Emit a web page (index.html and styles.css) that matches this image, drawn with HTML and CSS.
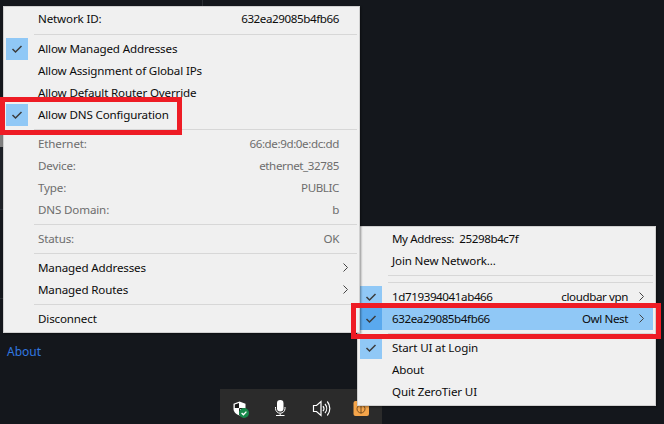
FILE: index.html
```html
<!DOCTYPE html>
<html lang="en">
<head>
<meta charset="utf-8">
<title>ZeroTier UI</title>
<link rel="stylesheet" href="styles.css">
</head>
<body>
<div class="desktop">
  <i class="bg-line bg-line-top"></i>
  <i class="bg-line bg-grey"></i>
  <i class="bg-line bg-strip"></i>
  <i class="bg-line bg-rule"></i>
  <a class="about-link">About</a>

  <div class="tray">
    <svg class="tray-icon" width="24" height="24" viewBox="0 0 24 24"><path d="M11.500 5.500l6 2.200v5c0 3.500-2.700 5.600-6 6.800-3.300-1.200-6-3.300-6-6.800v-5z" fill="#fff"/><path d="M11 7v5H6.800V8.500z" fill="#1a1a1a"/><path d="M11.500 12h6v1h-6zM11 12.500h1V19h-1z" fill="#1a1a1a"/><circle cx="16" cy="17" r="5" fill="#17894a"/><path d="M13.600 17l1.800 1.800 3-3.200" fill="none" stroke="#fff" stroke-width="1.300"/></svg>
    <svg class="tray-icon" width="24" height="24" viewBox="0 0 24 24"><rect x="9" y="4" width="6.500" height="11.500" rx="3.200" fill="#fff"/><path d="M7.500 11v1.500a4.700 4.700 0 0 0 9.500 0V11M12.200 17.500v2M8 19.500h8.500" fill="none" stroke="#fff" stroke-width="1"/></svg>
    <svg class="tray-icon" width="24" height="24" viewBox="0 0 24 24"><path d="M5.500 9.500h3l4.500-4v14l-4.500-4h-3z" fill="none" stroke="#fff" stroke-width="1.200"/><path d="M15 10a4 4 0 0 1 0 5M17 8a7 7 0 0 1 0 9M19.300 5.500a11 11 0 0 1 0 14" fill="none" stroke="#fff" stroke-width="1.200"/></svg>
    <svg class="tray-icon" width="24" height="24" viewBox="0 0 24 24"><rect x="5.500" y="5" width="15.500" height="15" rx="2" fill="#f5a54a"/><path d="M13 8v9.500M10.500 9.800a4 4 0 1 0 5 0" fill="none" stroke="#7a5020" stroke-width="1"/></svg>
  </div>

  <div class="menu menu-tray">
    <div class="row"><span class="check"></span><span class="label hex">My Address:&nbsp; 25298b4c7f</span></div>
    <div class="row"><span class="check"></span><span class="label">Join New Network...</span></div>
    <div class="sep"></div>
    <div class="sep"></div>
    <div class="row"><span class="check on"><svg width="12" height="10" viewBox="0 0 12 10"><path d="M1.500 5l3 3L10.500 2" fill="none" stroke="#3c3c3c" stroke-width="1.500"/></svg></span><span class="label hex">1d719394041ab466</span><span class="value">cloudbar vpn</span><svg class="arrow" width="5" height="9" viewBox="0 0 5 9"><path d="M.5.500l4 4-4 4" fill="none" stroke="#444"/></svg></div>
    <div class="row selected"><span class="check on"><svg width="12" height="10" viewBox="0 0 12 10"><path d="M1.500 5l3 3L10.500 2" fill="none" stroke="#3c3c3c" stroke-width="1.500"/></svg></span><span class="label hex">632ea29085b4fb66</span><span class="value">Owl Nest</span><svg class="arrow" width="5" height="9" viewBox="0 0 5 9"><path d="M.5.500l4 4-4 4" fill="none" stroke="#444"/></svg></div>
    <div class="sep"></div>
    <div class="row"><span class="check on"><svg width="12" height="10" viewBox="0 0 12 10"><path d="M1.500 5l3 3L10.500 2" fill="none" stroke="#3c3c3c" stroke-width="1.500"/></svg></span><span class="label">Start UI at Login</span></div>
    <div class="row"><span class="check"></span><span class="label">About</span></div>
    <div class="row"><span class="check"></span><span class="label">Quit ZeroTier UI</span></div>
  </div>

  <div class="menu menu-network">
    <div class="row"><span class="check"></span><span class="label">Network ID:</span><span class="value">632ea29085b4fb66</span></div>
    <div class="sep sep-wide"></div>
    <div class="row"><span class="check on"><svg width="12" height="10" viewBox="0 0 12 10"><path d="M1.500 5l3 3L10.500 2" fill="none" stroke="#3c3c3c" stroke-width="1.500"/></svg></span><span class="label">Allow Managed Addresses</span></div>
    <div class="row"><span class="check"></span><span class="label">Allow Assignment of Global IPs</span></div>
    <div class="row"><span class="check"></span><span class="label">Allow Default Router Override</span></div>
    <div class="row"><span class="check on"><svg width="12" height="10" viewBox="0 0 12 10"><path d="M1.500 5l3 3L10.500 2" fill="none" stroke="#3c3c3c" stroke-width="1.500"/></svg></span><span class="label">Allow DNS Configuration</span></div>
    <div class="sep"></div>
    <div class="row dim"><span class="check"></span><span class="label">Ethernet:</span><span class="value">66:de:9d:0e:dc:dd</span></div>
    <div class="row dim"><span class="check"></span><span class="label">Device:</span><span class="value">ethernet_32785</span></div>
    <div class="row dim"><span class="check"></span><span class="label">Type:</span><span class="value">PUBLIC</span></div>
    <div class="row dim"><span class="check"></span><span class="label">DNS Domain:</span><span class="value">b</span></div>
    <div class="sep"></div>
    <div class="row dim"><span class="check"></span><span class="label">Status:</span><span class="value">OK</span></div>
    <div class="sep"></div>
    <div class="row"><span class="check"></span><span class="label">Managed Addresses</span><svg class="arrow" width="5" height="9" viewBox="0 0 5 9"><path d="M.5.500l4 4-4 4" fill="none" stroke="#444"/></svg></div>
    <div class="row"><span class="check"></span><span class="label">Managed Routes</span><svg class="arrow" width="5" height="9" viewBox="0 0 5 9"><path d="M.5.500l4 4-4 4" fill="none" stroke="#444"/></svg></div>
    <div class="sep"></div>
    <div class="row"><span class="check"></span><span class="label">Disconnect</span></div>
  </div>

  <div class="callout callout-dns"></div>
  <div class="callout callout-net"></div>
</div>
</body>
</html>
```
FILE: styles.css
```css
html, body { margin: 0; padding: 0; }
.desktop {
  position: relative;
  width: 664px;
  height: 424px;
  overflow: hidden;
  background: #14171c;
  font: 11.6px "Noto Sans", "Open Sans", sans-serif;
  letter-spacing: -0.15px;
  color: #0c0c0c;
}
.bg-line { position: absolute; background: #2b2e33; }
.bg-line-top { left: 202px; top: 0; width: 1px; height: 6px; }
.bg-grey { left: 0; top: 135px; width: 3px; height: 12px; background: #7f7f7f; }
.bg-strip { left: 0; top: 147px; width: 3px; height: 62px; background: #1e2127; border-bottom: 1px solid #30333a; }
.bg-rule { left: 0; top: 298px; width: 3px; height: 1px; }
.about-link { position: absolute; left: 7px; top: 343px; font-size: 12px; letter-spacing: 0; color: #3178e0; }
.tray {
  position: absolute;
  left: 220px;
  top: 389px;
  width: 162px;
  height: 35px;
  box-sizing: border-box;
  padding: 7px 0 0 8px;
  background: #2b2b2b;
  display: flex;
  align-items: flex-start;
  gap: 16px;
}
.tray-icon { flex: none; }
.menu {
  position: absolute;
  box-sizing: border-box;
  padding: 1px 2px;
  background: #f0f0f0;
  border: 1px solid #d0d0d0;
  box-shadow: 1px 1px 2px rgba(0,0,0,.4);
}
.menu-network { left: 3px; top: 6px; width: 357px; height: 327px; }
.menu-tray { left: 357px; top: 226px; width: 299px; height: 180px; }
.row {
  display: flex;
  align-items: center;
  height: 22px;
  padding-right: 18px;
  position: relative;
}
.menu-tray .row { padding-right: 25px; }
.check {
  flex: none;
  width: 22px;
  height: 22px;
  margin-right: 10px;
  display: flex;
  align-items: center;
  justify-content: center;
}
.check.on { background: #90c8f6; }
.label { flex: 1; white-space: nowrap; padding-bottom: 2px; }
.label.hex { letter-spacing: -0.4px; }
.value { white-space: nowrap; letter-spacing: -0.4px; padding-bottom: 2px; }
.dim { color: #6d6d6d; }
.arrow { position: absolute; right: 9px; top: 6px; }
.sep { height: 7px; margin-left: 28px; display: flex; align-items: center; }
.sep-wide { height: 8px; }
.sep::before { content: ""; flex: 1; height: 1px; background: #d7d7d7; }
.selected { background: #90c8f6; }
.selected .check { background: #5aa9ee; }
.callout {
  position: absolute;
  box-sizing: border-box;
  border: 5px solid #ee1c25;
}
.callout-dns { left: 0; top: 97px; width: 182px; height: 38px; }
.callout-net { left: 351px; top: 303px; width: 310px; height: 36px; }
```
